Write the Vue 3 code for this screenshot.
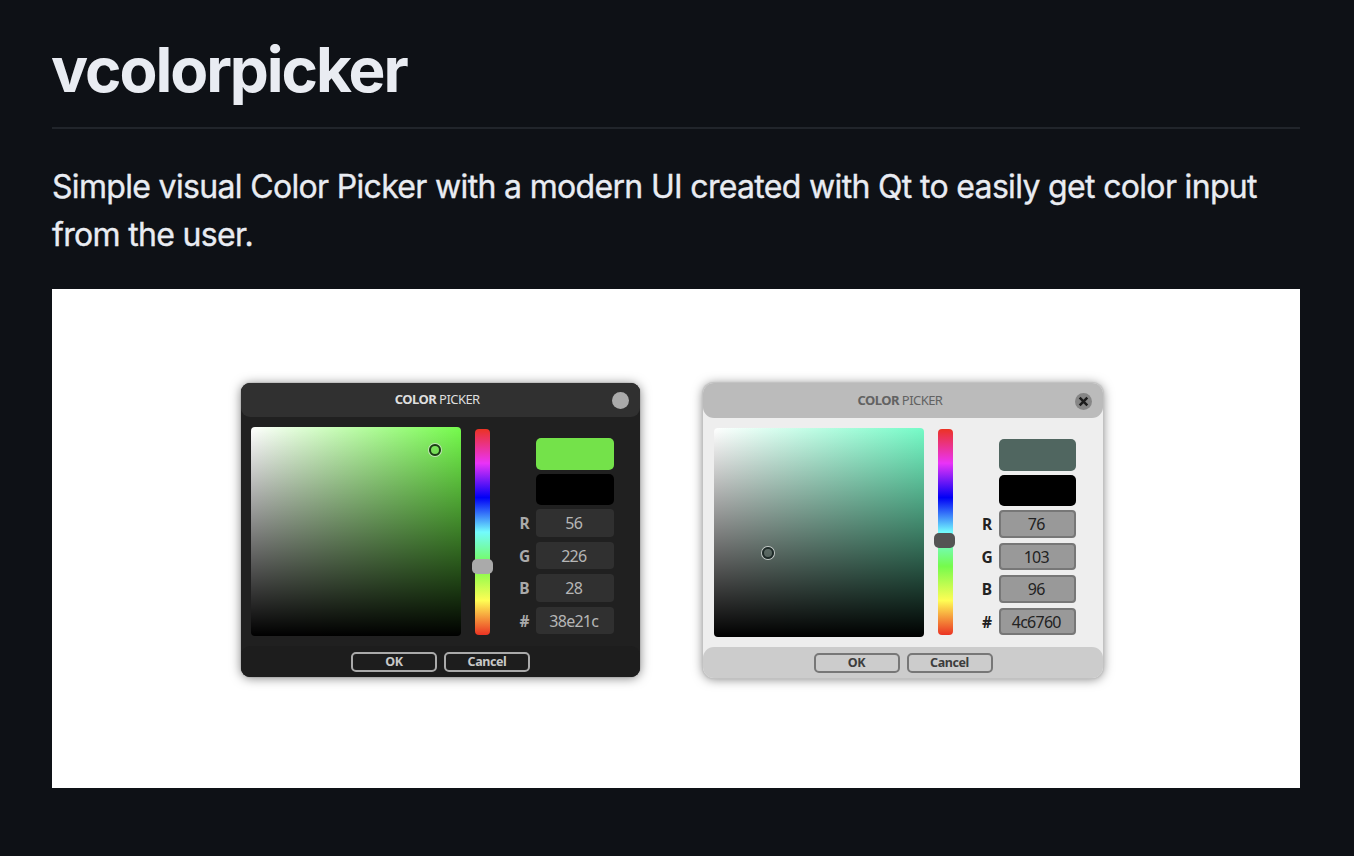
<script setup>
const pickers = [
  {
    theme: 'dark',
    fields: [['R', '56'], ['G', '226'], ['B', '28'], ['#', '38e21c']],
  },
  {
    theme: 'light',
    fields: [['R', '76'], ['G', '103'], ['B', '96'], ['#', '4c6760']],
  },
]
</script>

<template>
  <main class="page">
    <h1><span>vcolorpicker</span></h1>
    <p class="intro"><span class="line first">Simple visual Color Picker with a modern UI created with Qt to easily get color input</span><br /><span class="line second">from the user.</span></p>
    <section class="showcase">
      <article v-for="p in pickers" :key="p.theme" class="dialog" :class="p.theme">
        <header class="titlebar">
          <span class="title"><b>COLOR</b> PICKER</span>
          <span class="close">
            <svg v-if="p.theme === 'light'" viewBox="0 0 17 17" width="17" height="17">
              <path d="M4.7 4.7 12.3 12.3M12.3 4.7 4.7 12.3" stroke="#1c1c1c" stroke-width="2.5" fill="none" />
            </svg>
          </span>
        </header>
        <div class="content">
          <div class="field"><i class="cursor"></i></div>
          <div class="hue"><i class="handle"></i></div>
          <div class="values">
            <div class="swatch current"></div>
            <div class="swatch previous"></div>
            <div v-for="f in p.fields" :key="f[0]" class="row">
              <b class="label">{{ f[0] }}</b>
              <span class="input">{{ f[1] }}</span>
            </div>
          </div>
        </div>
        <footer class="actions">
          <button>OK</button>
          <button>Cancel</button>
        </footer>
      </article>
    </section>
  </main>
</template>

<style>
body {
  margin: 0;
  background: #0e1116;
}
</style>

<style scoped>
* {
  box-sizing: border-box;
}
.page {
  height: 856px;
  padding: 38px 54px 0 52px;
  background: #0e1116;
  color: #e9ecf2;
  font-family: Inter, "Liberation Sans", sans-serif;
  overflow: hidden;
}
h1 {
  margin: 0 0 0 -1px;
  height: 91px;
  font-size: 62px;
  line-height: 63px;
  font-weight: 700;
  letter-spacing: -2.05px;
  box-shadow: inset 0 -2px #21252b;
  clip-path: inset(0 0 0 1px);
}
.intro {
  margin: 34px 0 0;
  height: 126px;
  font-size: 32px;
  line-height: 48px;
  white-space: nowrap;
  -webkit-text-stroke: 0.35px #e9ecf2;
}
.line {
  letter-spacing: -0.67px;
}
.showcase {
  display: flex;
  align-items: flex-start;
  gap: 64px;
  height: 499px;
  padding: 94px 0 0 189px;
  background: #fff;
}
.dialog {
  width: 398.5px;
  height: 294px;
  border-radius: 9px;
  font-family: "Noto Sans", "Open Sans", sans-serif;
}
.dark {
  background: #202020;
  box-shadow: 0 0 1px rgba(0, 0, 0, 0.6), 0 1px 11px rgba(0, 0, 0, 0.5);
}
.light {
  width: 400px;
  height: 295px;
  margin-left: -0.5px;
  background: #eee;
  border-radius: 11px;
  box-shadow: 0 0 1px 0.5px #c2c2c2, 0 1px 11px rgba(0, 0, 0, 0.5);
}
.titlebar {
  height: 34px;
  display: grid;
  grid-template-columns: 1fr 17px;
  align-items: center;
  padding: 0 10.5px;
  border-radius: 9px;
  background: #303030;
}
.light .titlebar {
  height: 35px;
  border-radius: 11px;
  background: #bbb;
  padding-right: 11px;
  padding-left: 11px;
}
.title {
  justify-self: center;
  position: relative;
  left: 5.5px;
  top: -1px;
  color: #dedede;
  font-size: 13px;
  letter-spacing: -0.55px;
  white-space: nowrap;
}
.light .title {
  color: #626262;
}
.close {
  width: 17px;
  height: 17px;
  border-radius: 50%;
  background: #aaa;
}
.close svg {
  display: block;
}
.light .close {
  background: #868686;
  margin-top: 2px;
}
.content {
  height: 229px;
  display: flex;
  padding: 10px 0 0 10px;
}
.light .content {
  padding-left: 10.5px;
}
.field {
  position: relative;
  width: 210px;
  height: 209px;
  margin-right: 14px;
  border-radius: 4px;
  background: linear-gradient(to bottom, transparent, #000), linear-gradient(to right, #fff, #75fb4c);
}
.light .field {
  background: linear-gradient(to bottom, transparent, #000), linear-gradient(to right, #fff, #75fbc7);
}
.cursor {
  position: absolute;
  left: 178px;
  top: 17px;
  width: 12px;
  height: 12px;
  border: 2px solid #1c3b16;
  border-radius: 50%;
  box-shadow: 0 0 0 1px #c5dfbc;
}
.light .cursor {
  left: 48px;
  top: 119px;
  border-color: #1e2a28;
  box-shadow: 0 0 0 1px #c4c9c7;
}
.hue {
  position: relative;
  width: 15px;
  height: 206px;
  margin: 1.5px 46px 0 0;
  border-radius: 4px;
  background: linear-gradient(to bottom, #eb3323 0%, #ea33f7 16.6%, #0000f5 33.3%, #73fbfd 50%, #75fb4c 66.6%, #fffd54 83.3%, #eb3323 100%);
}
.light .hue {
  margin-top: 1px;
}
.handle {
  position: absolute;
  left: -3.5px;
  top: 130.5px;
  width: 21px;
  height: 15px;
  border-radius: 5px;
  background: #aaa;
}
.light .handle {
  top: 103.5px;
  background: #545454;
}
.values {
  display: flex;
  flex-direction: column;
  padding-top: 11px;
}
.swatch {
  height: 31.5px;
  margin-bottom: 4px;
  border-radius: 5px;
}
.current {
  background: #74e24a;
}
.light .current {
  background: #506660;
}
.previous {
  background: #000;
}
.row {
  position: relative;
  width: 77.5px;
  height: 27.5px;
  margin-bottom: 5px;
}
.label {
  position: absolute;
  right: 100%;
  width: 23px;
  text-align: center;
  color: #aaa;
  font-size: 15.5px;
  font-weight: 700;
  line-height: 28px;
}
.light .label {
  color: #222;
}
.input {
  display: block;
  height: 27.5px;
  padding-right: 2px;
  border-radius: 4px;
  background: #303030;
  color: #b6b6b6;
  font-size: 16px;
  line-height: 29px;
  text-align: center;
  letter-spacing: -0.75px;
}
.light .input {
  background: #999;
  border: 2px solid #777;
  color: #222;
  line-height: 25px;
}
.actions {
  height: 31px;
  display: flex;
  gap: 7px;
  padding: 5.5px 0 0 110px;
  border-radius: 9px;
  background: #1d1d1d;
}
.light .actions {
  padding: 5.5px 0 0 110.5px;
  border-radius: 11px;
  background: #ccc;
}
button {
  width: 86px;
  height: 20px;
  padding: 0;
  border: 2px solid #aaa;
  border-radius: 5px;
  background: none;
  color: #c8c8c8;
  font-family: inherit;
  font-size: 12.5px;
  font-weight: 700;
  letter-spacing: -0.4px;
  line-height: 16px;
}
.light button {
  border-color: #777;
  color: #3d3d3d;
}
</style>
